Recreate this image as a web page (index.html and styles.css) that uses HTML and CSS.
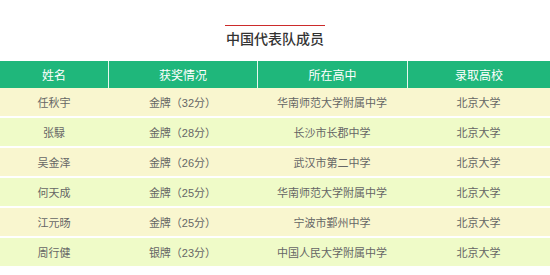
FILE: index.html
```html
<!DOCTYPE html>
<html lang="zh-CN">
<head>
<meta charset="utf-8">
<title>中国代表队成员</title>
<link rel="stylesheet" href="styles.css">
</head>
<body>
<div class="page">
  <div class="heading">
    <div class="rule"></div>
    <h2 class="title">中国代表队成员</h2>
  </div>
  <table class="team">
    <colgroup>
      <col class="c1"><col class="c2"><col class="c3"><col class="c4">
    </colgroup>
    <thead>
      <tr><th>姓名</th><th>获奖情况</th><th>所在高中</th><th>录取高校</th></tr>
    </thead>
    <tbody>
      <tr><td>任秋宇</td><td>金牌（32分）</td><td>华南师范大学附属中学</td><td>北京大学</td></tr>
      <tr><td>张騄</td><td>金牌（28分）</td><td>长沙市长郡中学</td><td>北京大学</td></tr>
      <tr><td>吴金泽</td><td>金牌（26分）</td><td>武汉市第二中学</td><td>北京大学</td></tr>
      <tr><td>何天成</td><td>金牌（25分）</td><td>华南师范大学附属中学</td><td>北京大学</td></tr>
      <tr><td>江元旸</td><td>金牌（25分）</td><td>宁波市鄞州中学</td><td>北京大学</td></tr>
      <tr><td>周行健</td><td>银牌（23分）</td><td>中国人民大学附属中学</td><td>北京大学</td></tr>
    </tbody>
  </table>
</div>
</body>
</html>
```

FILE: styles.css
```css
html, body {
  margin: 0;
  padding: 0;
  background: #ffffff;
}
body {
  font-family: "Liberation Sans", "Noto Sans CJK SC", sans-serif;
}
.page {
  width: 550px;
  padding-top: 25px;
}
.heading {
  display: flex;
  flex-direction: column;
  align-items: center;
  margin-bottom: 9px;
}
.rule {
  width: 100px;
  height: 1px;
  background: #cc2b2b;
}
.title {
  margin: 0;
  height: 26px;
  line-height: 26px;
  font-size: 14px;
  font-weight: 500;
  color: #333333;
}
.team {
  width: 550px;
  border-collapse: separate;
  border-spacing: 0;
  table-layout: fixed;
}
.c1 { width: 108px; }
.c2 { width: 149px; }
.c3 { width: 150px; }
.c4 { width: 143px; }
.team th {
  height: 27px;
  padding: 0;
  background: #1fb77b;
  color: #ffffff;
  font-size: 12px;
  font-weight: normal;
  text-align: center;
  vertical-align: middle;
  border-left: 1px solid #e8f7ef;
}
.team th:first-child {
  border-left: none;
}
.team td {
  height: 28px;
  padding: 0;
  font-size: 11px;
  color: #666666;
  text-align: center;
  vertical-align: middle;
  border-bottom: 2px solid #ffffff;
}
.team tbody tr:nth-child(odd) td {
  background: #f9f6cf;
}
.team tbody tr:nth-child(even) td {
  background: #effbc8;
}
```
